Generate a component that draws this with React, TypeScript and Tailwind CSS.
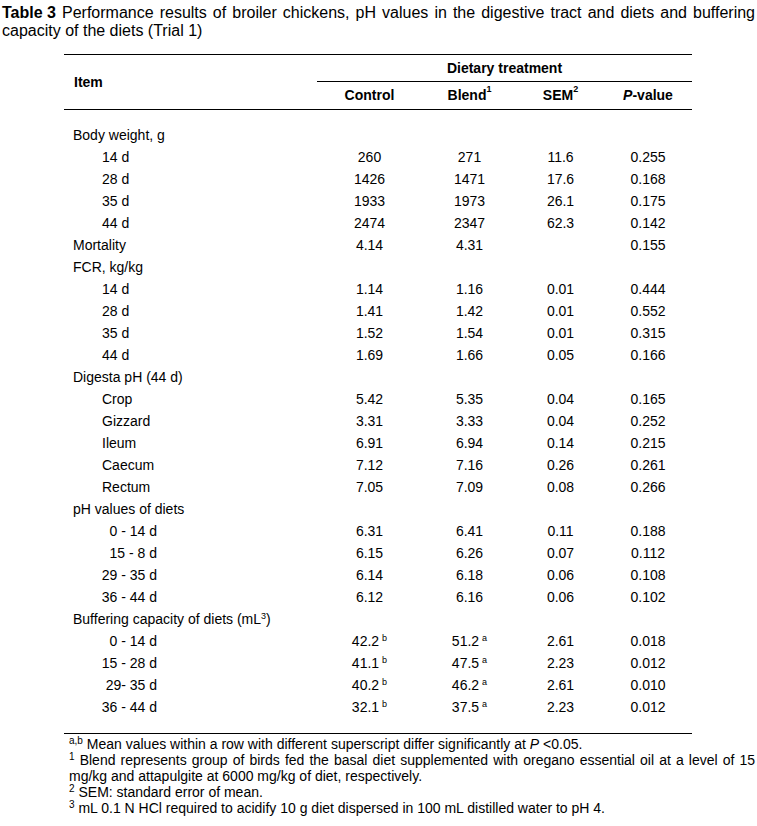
import React from 'react';

type Row = {
  label: string;
  kind: 'group' | 'sub' | 'right';
  v?: [string, string, string, string];
  sup?: [string, string];
};

const rows: Row[] = [
  { label: 'Body weight, g', kind: 'group' },
  { label: '14 d', kind: 'sub', v: ['260', '271', '11.6', '0.255'] },
  { label: '28 d', kind: 'sub', v: ['1426', '1471', '17.6', '0.168'] },
  { label: '35 d', kind: 'sub', v: ['1933', '1973', '26.1', '0.175'] },
  { label: '44 d', kind: 'sub', v: ['2474', '2347', '62.3', '0.142'] },
  { label: 'Mortality', kind: 'group', v: ['4.14', '4.31', '', '0.155'] },
  { label: 'FCR, kg/kg', kind: 'group' },
  { label: '14 d', kind: 'sub', v: ['1.14', '1.16', '0.01', '0.444'] },
  { label: '28 d', kind: 'sub', v: ['1.41', '1.42', '0.01', '0.552'] },
  { label: '35 d', kind: 'sub', v: ['1.52', '1.54', '0.01', '0.315'] },
  { label: '44 d', kind: 'sub', v: ['1.69', '1.66', '0.05', '0.166'] },
  { label: 'Digesta pH (44 d)', kind: 'group' },
  { label: 'Crop', kind: 'sub', v: ['5.42', '5.35', '0.04', '0.165'] },
  { label: 'Gizzard', kind: 'sub', v: ['3.31', '3.33', '0.04', '0.252'] },
  { label: 'Ileum', kind: 'sub', v: ['6.91', '6.94', '0.14', '0.215'] },
  { label: 'Caecum', kind: 'sub', v: ['7.12', '7.16', '0.26', '0.261'] },
  { label: 'Rectum', kind: 'sub', v: ['7.05', '7.09', '0.08', '0.266'] },
  { label: 'pH values of diets', kind: 'group' },
  { label: '0 - 14 d', kind: 'right', v: ['6.31', '6.41', '0.11', '0.188'] },
  { label: '15 - 8 d', kind: 'right', v: ['6.15', '6.26', '0.07', '0.112'] },
  { label: '29 - 35 d', kind: 'right', v: ['6.14', '6.18', '0.06', '0.108'] },
  { label: '36 - 44 d', kind: 'right', v: ['6.12', '6.16', '0.06', '0.102'] },
  { label: 'Buffering capacity of diets (mL', kind: 'group' },
  { label: '0 - 14 d', kind: 'right', v: ['42.2', '51.2', '2.61', '0.018'], sup: ['b', 'a'] },
  { label: '15 - 28 d', kind: 'right', v: ['41.1', '47.5', '2.23', '0.012'], sup: ['b', 'a'] },
  { label: '29- 35 d', kind: 'right', v: ['40.2', '46.2', '2.61', '0.010'], sup: ['b', 'a'] },
  { label: '36 - 44 d', kind: 'right', v: ['32.1', '37.5', '2.23', '0.012'], sup: ['b', 'a'] },
];

const titleWords = [
  'Performance', 'results', 'of', 'broiler', 'chickens,', 'pH', 'values', 'in', 'the',
  'digestive', 'tract', 'and', 'diets', 'and', 'buffering',
];

const Label = ({ row }: { row: Row }) => {
  if (row.kind === 'right') {
    return <div className="w-[93px] text-right">{row.label}</div>;
  }
  const isBuffer = row.label.startsWith('Buffering');
  return (
    <div className={row.kind === 'group' ? 'pl-[9px]' : 'pl-[38px]'}>
      {row.label}
      {isBuffer && (
        <>
          <sup className="text-[9px]">3</sup>)
        </>
      )}
    </div>
  );
};

const App = () => {
  return (
    <div className="w-[757px] bg-white text-black font-['Liberation_Sans',Arial,sans-serif] pb-4">
      {/* Caption */}
      <div className="px-[2px] pt-[4px] text-[16px] leading-[18px]">
        <div className="flex justify-between whitespace-nowrap">
          <b>Table 3</b>
          {titleWords.map((w, i) => (
            <span key={i}>{w}</span>
          ))}
        </div>
        <div>capacity of the diets (Trial 1)</div>
      </div>

      {/* Table */}
      <div className="ml-[64px] mt-[14px] w-[628px] text-[14px]">
        <div className="grid grid-cols-[253px_105px_95px_87px_88px] grid-rows-[27px_27px] border-y border-black font-bold">
          <div className="row-span-2 flex items-center pl-[10px]">Item</div>
          <div className="col-span-4 flex items-center justify-center border-b border-black">Dietary treatment</div>
          <div className="flex items-center justify-center">Control</div>
          <div className="flex items-center justify-center">
            Blend<sup className="text-[9px] -top-[0.7em]">1</sup>
          </div>
          <div className="flex items-center justify-center">
            SEM<sup className="text-[9px] -top-[0.7em]">2</sup>
          </div>
          <div className="flex items-center justify-center">
            <i>P</i>-value
          </div>
        </div>

        <div className="pt-[14px] pb-[15px] border-b border-black">
          {rows.map((row, i) => (
            <div key={i} className="grid grid-cols-[253px_105px_95px_87px_88px] h-[22px] items-center">
              <Label row={row} />
              {[0, 1, 2, 3].map((c) => (
                <div key={c} className="text-center">
                  {row.v ? row.v[c] : ''}
                  {row.sup && c < 2 && (
                    <sup className="text-[9px] ml-[3px]">{row.sup[c]}</sup>
                  )}
                </div>
              ))}
            </div>
          ))}
        </div>
      </div>

      {/* Footnotes */}
      <div className="pl-[69px] pr-[2px] pt-[2px] text-[14px] leading-[16px]">
        <div className="whitespace-nowrap">
          <sup className="text-[10px]">a,b</sup> Mean values within a row with different superscript differ significantly at <i>P</i> &lt;0.05.
        </div>
        <div className="text-justify [text-align-last:justify]">
          <sup className="text-[10px]">1</sup> Blend represents group of birds fed the basal diet supplemented with oregano essential oil at a level of 15
        </div>
        <div className="whitespace-nowrap">mg/kg and attapulgite at 6000 mg/kg of diet, respectively.</div>
        <div className="whitespace-nowrap">
          <sup className="text-[10px]">2</sup> SEM: standard error of mean.
        </div>
        <div className="whitespace-nowrap">
          <sup className="text-[10px]">3</sup> mL 0.1 N HCl required to acidify 10 g diet dispersed in 100 mL distilled water to pH 4.
        </div>
      </div>
    </div>
  );
};

export default App;
